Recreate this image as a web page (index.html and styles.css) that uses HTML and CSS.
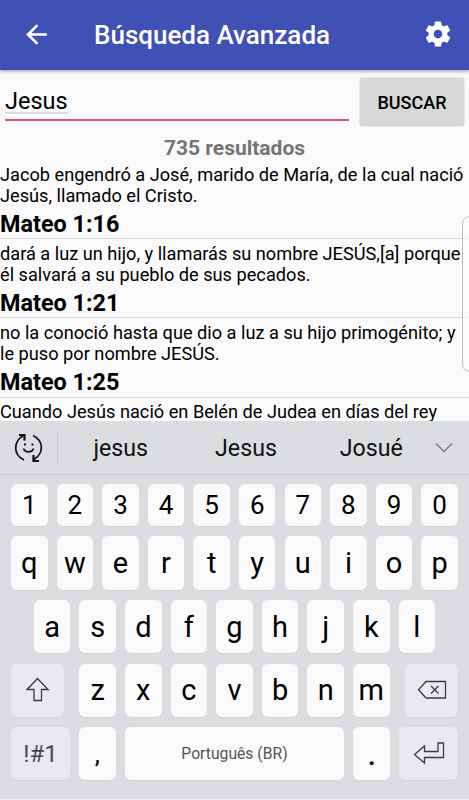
FILE: index.html
```html
<!DOCTYPE html>
<html lang="es">
<head>
  <meta charset="UTF-8" />
  <title>Búsqueda Avanzada</title>
  <link rel="stylesheet" href="styles.css">
</head>
<body>
  <header>
    <svg class="back" viewBox="0 0 24 24"><path d="M20 11H7.83l5.59-5.59L12 4l-8 8 8 8 1.41-1.41L7.83 13H20v-2z"/></svg>
    <h1>Búsqueda Avanzada</h1>
    <svg class="settings" viewBox="0 0 24 24"><path d="M19.43 12.98c.04-.32.07-.64.07-.98s-.03-.66-.07-.98l2.11-1.65c.19-.15.24-.42.12-.64l-2-3.46c-.12-.22-.39-.3-.61-.22l-2.49 1c-.52-.4-1.08-.73-1.69-.98l-.38-2.65C14.46 2.18 14.25 2 14 2h-4c-.25 0-.46.18-.49.42l-.38 2.65c-.61.25-1.17.59-1.69.98l-2.49-1c-.23-.09-.49 0-.61.22l-2 3.46c-.13.22-.07.49.12.64l2.11 1.65c-.04.32-.07.65-.07.98s.03.66.07.98l-2.11 1.65c-.19.15-.24.42-.12.64l2 3.46c.12.22.39.3.61.22l2.49-1c.52.4 1.08.73 1.69.98l.38 2.65c.03.24.24.42.49.42h4c.25 0 .46-.18.49-.42l.38-2.65c.61-.25 1.17-.59 1.69-.98l2.49 1c.23.09.49 0 .61-.22l2-3.46c.12-.22.07-.49-.12-.64l-2.11-1.65zM12 15.5c-1.93 0-3.5-1.57-3.5-3.5s1.57-3.5 3.5-3.5 3.5 1.57 3.5 3.5-1.57 3.5-3.5 3.5z"/></svg>
  </header>

  <main>
    <div class="search">
      <div class="field"><span>Jesus</span></div>
      <button>BUSCAR</button>
    </div>
    <p class="count">735 resultados</p>
    <div class="results">
      <div class="verse">
        <p>Jacob engendró a José, marido de María, de la cual nació<br>Jesús, llamado el Cristo.</p>
        <h2>Mateo 1:16</h2>
      </div>
      <div class="verse">
        <p>dará a luz un hijo, y llamarás su nombre JESÚS,[a] porque<br>él salvará a su pueblo de sus pecados.</p>
        <h2>Mateo 1:21</h2>
      </div>
      <div class="verse">
        <p>no la conoció hasta que dio a luz a su hijo primogénito; y<br>le puso por nombre JESÚS.</p>
        <h2>Mateo 1:25</h2>
      </div>
      <div class="verse">
        <p>Cuando Jesús nació en Belén de Judea en días del rey</p>
      </div>
    </div>
    <div class="edge-handle"></div>
  </main>

  <div class="keyboard">
    <div class="suggestions">
      <svg class="emoji" viewBox="0 0 29 29">
        <path d="M10 27C-1 21.500-1 8.500 9.500 2.500M19 2.500C30 8 30 20 20 26.500"/>
        <path class="tip" d="M5 2H10.500V7.500M25 28H19.500V22"/>
        <path d="M9.500 15.500c1.500 4.500 8.500 4.500 10 0"/>
        <path class="eyes" d="M10 11.500h2M17.500 11.500h2"/>
      </svg>
      <div class="words"><span>jesus</span><span>Jesus</span><span>Josué</span></div>
      <svg class="chevron" viewBox="0 0 18 12"><path d="M1 1.500l8 8 8-8"/></svg>
    </div>
    <div class="keys">
      <div class="row numbers">
        <span class="key">1</span><span class="key">2</span><span class="key">3</span><span class="key">4</span><span class="key">5</span><span class="key">6</span><span class="key">7</span><span class="key">8</span><span class="key">9</span><span class="key">0</span>
      </div>
      <div class="row">
        <span class="key">q</span><span class="key">w</span><span class="key">e</span><span class="key">r</span><span class="key">t</span><span class="key">y</span><span class="key">u</span><span class="key">i</span><span class="key">o</span><span class="key">p</span>
      </div>
      <div class="row middle">
        <span class="key">a</span><span class="key">s</span><span class="key">d</span><span class="key">f</span><span class="key">g</span><span class="key">h</span><span class="key">j</span><span class="key">k</span><span class="key">l</span>
      </div>
      <div class="row spread">
        <span class="key fn">
          <svg class="shift" viewBox="0 0 24 26"><path d="M11.500 1.500L22 12.500H15.500V23.500H8V12.500H1z"/></svg>
        </span>
        <div class="letters">
          <span class="key">z</span><span class="key">x</span><span class="key">c</span><span class="key">v</span><span class="key">b</span><span class="key">n</span><span class="key">m</span>
        </div>
        <span class="key fn">
          <svg class="delete" viewBox="0 0 30 20"><path d="M9 1.500H28.500V18H9L1.500 9.800zM14 6l7.500 7.500M21.500 6L14 13.500"/></svg>
        </span>
      </div>
      <div class="row">
        <span class="key fn wide">!#1</span>
        <span class="key comma">,</span>
        <span class="key space">Português (BR)</span>
        <span class="key dot">.</span>
        <span class="key fn wide">
          <svg class="enter" viewBox="0 0 32 24"><path d="M1.500 12.500L11.500 4V9.500H25V1H30.500V15.500H11.500V21z"/></svg>
        </span>
      </div>
    </div>
  </div>
</body>
</html>
```
FILE: styles.css
```css
* {
  box-sizing: border-box;
}

body {
  margin: 0;
  height: 800px;
  display: flex;
  flex-direction: column;
  overflow: hidden;
  background: #fafafa;
  color: #000;
  font-family: Roboto, sans-serif;
}

h1, h2, p {
  margin: 0;
}

header {
  flex: none;
  height: 70px;
  display: flex;
  align-items: center;
  padding: 0 16px 2px 21px;
  background: #3f51b5;
  color: #fff;
  box-shadow: 0 1px 4px #00000066;
  z-index: 1;
}

header svg {
  width: 31px;
  height: 31px;
  fill: #fff;
}

header .settings {
  width: 30px;
  height: 30px;
}

h1 {
  flex: 1;
  padding: 2px 0 0 42px;
  font-size: 26px;
  font-weight: 500;
}

main {
  position: relative;
  height: 351px;
  overflow: hidden;
}

.search {
  display: flex;
  justify-content: space-between;
  padding: 8px 5px 0;
}

.field {
  width: 344px;
  height: 42.5px;
  padding-top: 8px;
  border-bottom: 2.5px solid #dc5087;
  font-size: 23.5px;
  line-height: 30px;
}

.field span {
  display: inline-block;
  height: 28px;
  border-bottom: 2px solid #dcdcdc;
}

button {
  width: 104px;
  height: 48px;
  padding: 0;
  border: 0;
  border-radius: 3px;
  background: #d6d7d7;
  box-shadow: 0 0 2px #00000044;
  color: #000;
  font: 500 18px Roboto, sans-serif;
}

.count {
  height: 34px;
  padding-top: 10px;
  color: #757575;
  font-size: 21px;
  font-weight: bold;
  line-height: 24px;
  text-align: center;
}

.verse {
  height: 79.2px;
  padding-top: 3.5px;
  border-bottom: 1px solid #d8d8d8;
  font-size: 18.2px;
  line-height: 21.4px;
  white-space: nowrap;
}

h2 {
  margin-top: 4.8px;
  font-size: 23.4px;
  line-height: 27.5px;
}

.edge-handle {
  position: absolute;
  top: 146px;
  right: -8px;
  width: 15px;
  height: 156px;
  border: 1px solid #bbb;
  border-radius: 8px;
  background: #fafafacc;
}

.keyboard {
  flex: 1;
  background: #dcdde1;
  border-bottom: 1px solid #f0f0f2;
}

.suggestions {
  display: flex;
  align-items: center;
  height: 54px;
  padding: 0 16px 0 14px;
  border-bottom: 1px solid #cbccd0;
}

svg {
  flex: none;
}

.keyboard svg {
  fill: none;
  stroke: #3c3c40;
  stroke-width: 1.3;
}

.suggestions .emoji {
  width: 29px;
  height: 29px;
  stroke: #111;
  stroke-width: 1.7;
}

.emoji .tip,
.emoji .eyes {
  stroke-width: 2.2;
}

.words {
  flex: 1;
  display: grid;
  grid-template-columns: repeat(3, 1fr);
  margin: 0 1px 0 14px;
  border-left: 1px solid #c8c9cd;
  height: 32px;
  line-height: 33px;
  font-size: 23.2px;
  color: #111;
  text-align: center;
}

.suggestions .chevron {
  width: 18px;
  height: 12px;
  stroke: #777;
}

.keys {
  display: flex;
  flex-direction: column;
  gap: 10.4px;
  padding: 9px 11px 0;
}

.row,
.letters {
  display: flex;
  gap: 9.1px;
}

.middle {
  justify-content: center;
}

.spread {
  justify-content: space-between;
}

.key {
  display: flex;
  align-items: center;
  justify-content: center;
  width: 36.5px;
  height: 53.2px;
  border-radius: 6px;
  background: #fafafa;
  box-shadow: 0 1px 1px #0000000c;
  font-size: 29px;
}

.numbers .key {
  height: 42px;
  font-size: 26px;
}

.key.fn {
  width: 53px;
  background: #e9eaee;
  color: #4a4a4e;
}

.key.wide {
  width: 59px;
  font-size: 24px;
}

.key.space {
  flex: 1;
  font-size: 15.7px;
  color: #555;
}

.key.comma {
  font-size: 26px;
}

.key.dot {
  padding-top: 2px;
  font-weight: 500;
}

.shift {
  width: 24px;
  height: 26px;
}

.delete {
  width: 30px;
  height: 20px;
}

.enter {
  width: 32px;
  height: 24px;
}
```
